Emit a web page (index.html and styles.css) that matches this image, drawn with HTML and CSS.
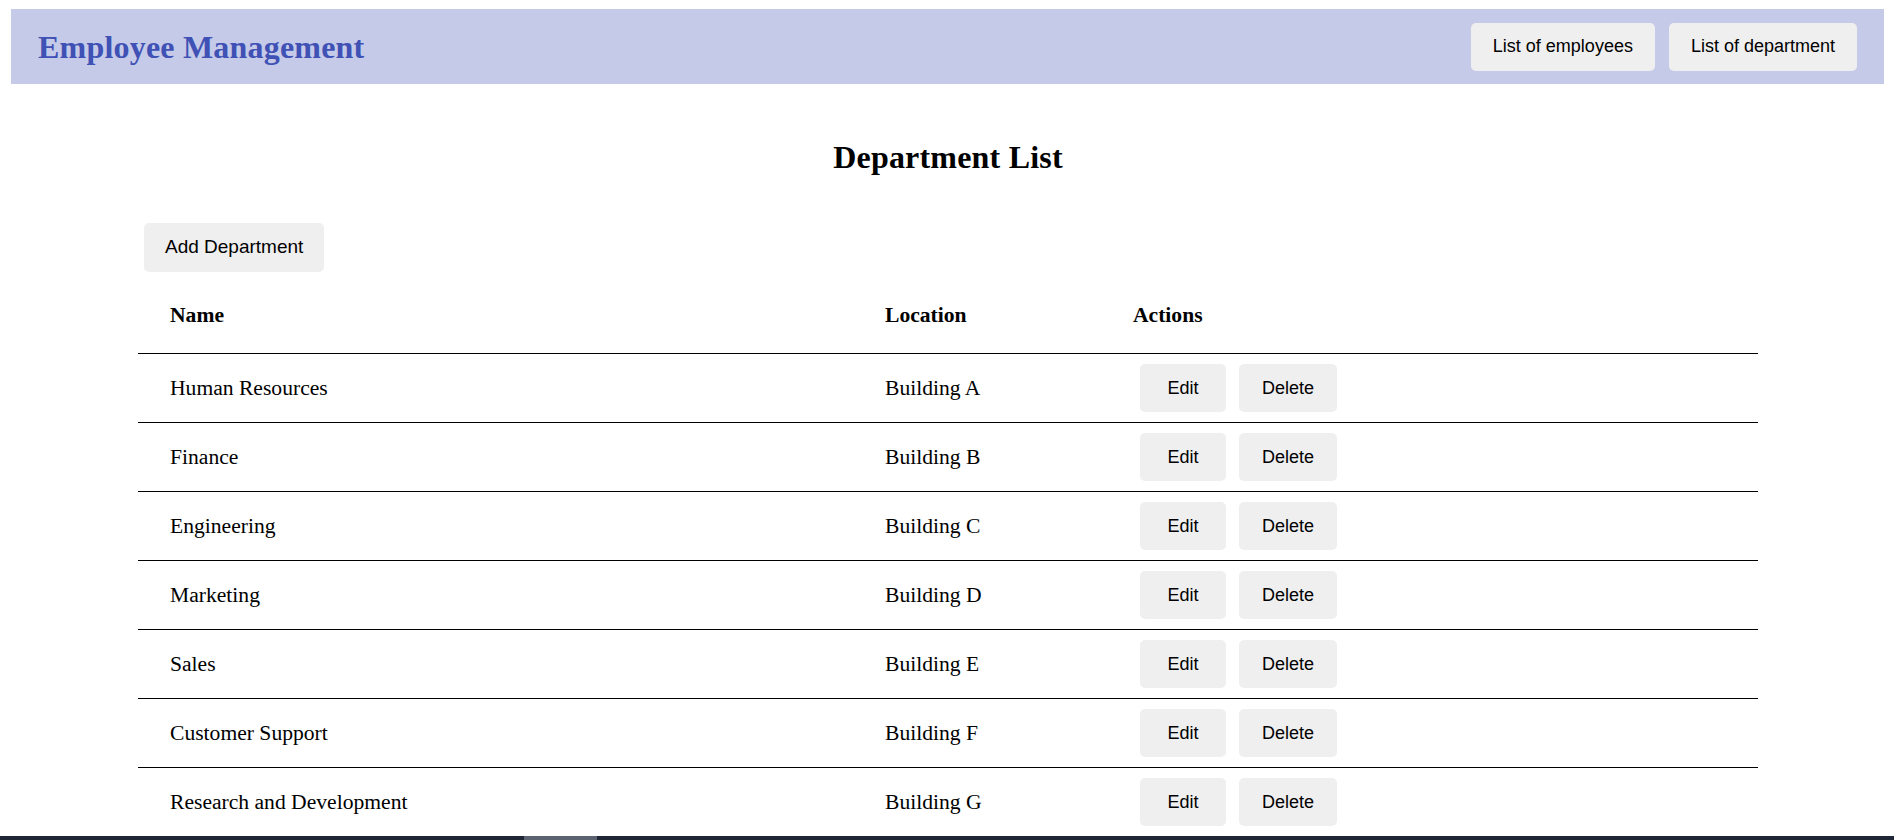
FILE: index.html
```html
<!DOCTYPE html>
<html lang="en">
<head>
<meta charset="utf-8">
<title>Employee Management</title>
<link rel="stylesheet" href="styles.css">
</head>
<body>
<header class="topbar">
  <h1 class="brand">Employee Management</h1>
  <nav class="nav">
    <button class="nav-btn">List of employees</button>
    <button class="nav-btn">List of department</button>
  </nav>
</header>

<main class="page">
  <h2 class="page-title">Department List</h2>
  <button class="add-btn">Add Department</button>
  <table class="dept-table">
    <colgroup>
      <col class="col-name">
      <col class="col-loc">
      <col class="col-act">
    </colgroup>
    <thead>
      <tr><th>Name</th><th>Location</th><th>Actions</th></tr>
    </thead>
    <tbody>
      <tr><td>Human Resources</td><td>Building A</td><td><div class="actions"><button class="btn btn-edit">Edit</button><button class="btn btn-del">Delete</button></div></td></tr>
      <tr><td>Finance</td><td>Building B</td><td><div class="actions"><button class="btn btn-edit">Edit</button><button class="btn btn-del">Delete</button></div></td></tr>
      <tr><td>Engineering</td><td>Building C</td><td><div class="actions"><button class="btn btn-edit">Edit</button><button class="btn btn-del">Delete</button></div></td></tr>
      <tr><td>Marketing</td><td>Building D</td><td><div class="actions"><button class="btn btn-edit">Edit</button><button class="btn btn-del">Delete</button></div></td></tr>
      <tr><td>Sales</td><td>Building E</td><td><div class="actions"><button class="btn btn-edit">Edit</button><button class="btn btn-del">Delete</button></div></td></tr>
      <tr><td>Customer Support</td><td>Building F</td><td><div class="actions"><button class="btn btn-edit">Edit</button><button class="btn btn-del">Delete</button></div></td></tr>
      <tr><td>Research and Development</td><td>Building G</td><td><div class="actions"><button class="btn btn-edit">Edit</button><button class="btn btn-del">Delete</button></div></td></tr>
    </tbody>
  </table>
</main>

<div class="scrollbar"><div class="scroll-thumb"></div></div>
</body>
</html>
```

FILE: styles.css
```css
html, body {
  margin: 0;
  padding: 0;
  background: #ffffff;
}

body {
  font-family: "Liberation Serif", "Times New Roman", serif;
  color: #000000;
}

.topbar {
  margin: 9px 10px 0 11px;
  height: 75px;
  padding: 0 27px;
  background: #c5cae9;
  display: flex;
  align-items: center;
  justify-content: space-between;
}

.brand {
  margin: 0;
  font-size: 32px;
  line-height: 36px;
  font-weight: bold;
  letter-spacing: 0.2px;
  color: #3f51b5;
}

.nav {
  display: flex;
  gap: 14px;
}

.nav-btn {
  height: 48px;
  padding: 0 22px;
  border: none;
  border-radius: 5px;
  background: #efefef;
  color: #000000;
  font-family: "Liberation Sans", Arial, sans-serif;
  font-size: 18px;
  cursor: pointer;
}

.page {
  width: 1620px;
  margin: 0 0 0 138px;
}

.page-title {
  margin: 55px 0 48px;
  text-align: center;
  font-size: 32px;
  line-height: 36px;
  font-weight: bold;
  letter-spacing: 0.2px;
}

.add-btn {
  display: block;
  margin-left: 6px;
  height: 49px;
  padding: 0 21px 1px;
  border: none;
  border-radius: 5px;
  background: #efefef;
  color: #000000;
  font-family: "Liberation Sans", Arial, sans-serif;
  font-size: 19px;
}

.dept-table {
  margin-top: 5px;
  width: 100%;
  border-collapse: collapse;
  table-layout: fixed;
  font-size: 21.6px;
}

.col-name { width: 715px; }
.col-loc { width: 248px; }

.dept-table th {
  text-align: left;
  font-weight: bold;
  padding: 25px 32px;
  line-height: 26px;
  border-bottom: 1px solid #000000;
}

.dept-table td {
  padding: 10px 32px;
  line-height: 26px;
  vertical-align: middle;
  border-bottom: 1px solid #000000;
}

.actions {
  display: flex;
  gap: 13px;
  padding-left: 7px;
}

.btn {
  height: 48px;
  padding: 0 23px;
  border: none;
  border-radius: 5px;
  background: #efefef;
  color: #000000;
  font-family: "Liberation Sans", Arial, sans-serif;
  font-size: 18px;
}

.btn-edit { min-width: 86px; }
.btn-del { min-width: 98px; }

.scrollbar {
  position: fixed;
  left: 0;
  right: 0;
  bottom: 0;
  height: 4px;
  background: #1f2636;
}

.scroll-thumb {
  margin-left: 524px;
  width: 73px;
  height: 4px;
  background: #5b6270;
}
```
